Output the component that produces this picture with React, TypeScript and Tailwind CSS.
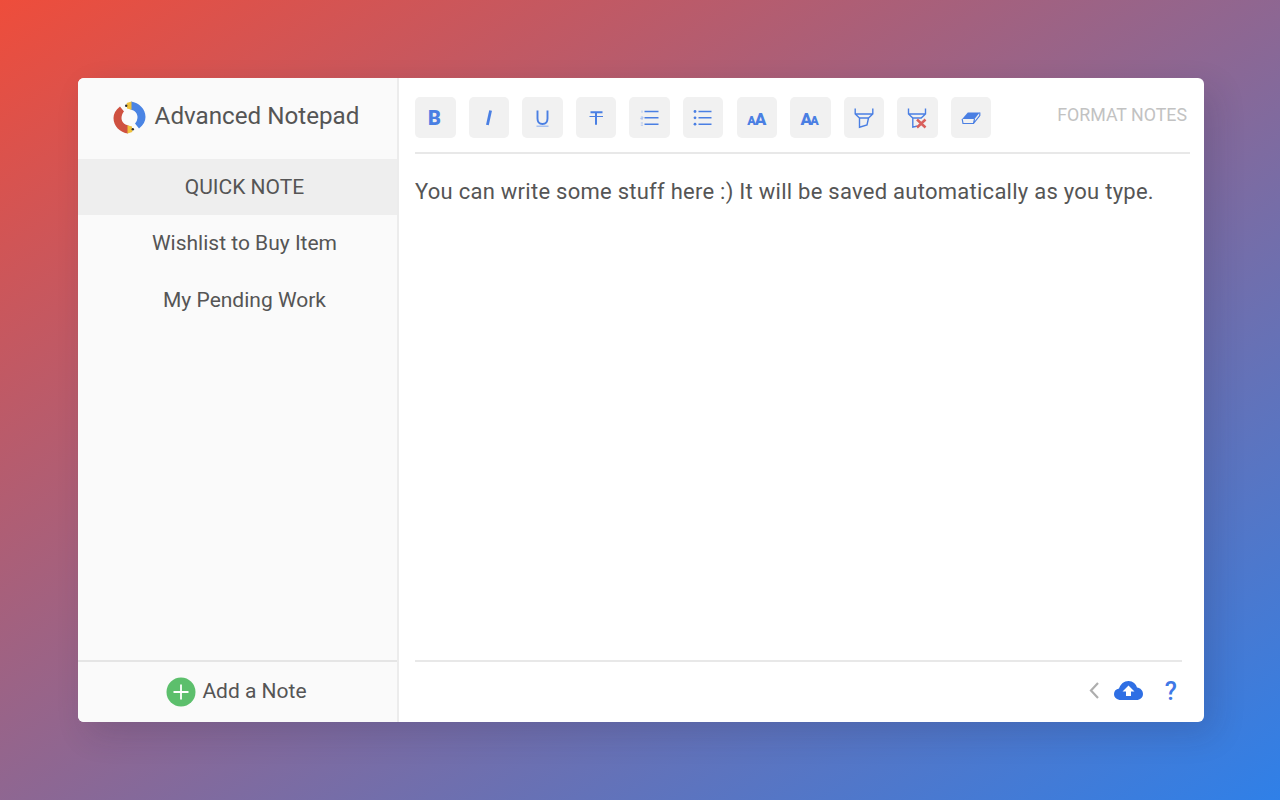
import React from 'react';

const blue = '#4a7fe3';

function ToolButton({ children }: { children: React.ReactNode }) {
  return (
    <button className="flex h-[41px] w-[40.5px] shrink-0 items-center justify-center rounded-[5px] bg-[#f1f1f1]">
      <svg width="24" height="24" viewBox="0 0 24 24" fill="none">
        {children}
      </svg>
    </button>
  );
}

function Logo() {
  const half = (
    <>
      <path d="M14.5 24.3L19 25.5L19.3 31L14.5 32.5Z" fill="#f0c23c" />
      <circle cx="19.8" cy="28.2" r="1.2" fill="#2d2d2d" />
    </>
  );
  return (
    <svg width="33" height="33" viewBox="0 0 33 33">
      <path d="M7 5.5C2.5 9 .5 13 .5 17C.5 25 7 31.5 15 32.5L15.5 24.5C11 23.8 8.5 20.5 8.5 17C8.5 14.5 9.5 12 11 10.5Z" fill="#cf5140" />
      {half}
      <g transform="rotate(180 16.5 16.5)">
        <path d="M7 5.5C2.5 9 .5 13 .5 17C.5 25 7 31.5 15 32.5L15.5 24.5C11 23.8 8.5 20.5 8.5 17C8.5 14.5 9.5 12 11 10.5Z" fill="#4a84e4" />
        {half}
      </g>
    </svg>
  );
}

export default function App() {
  return (
    <div className="flex h-screen w-full items-center justify-center bg-[linear-gradient(to_bottom_right,#ee4d3b_0%,#2f80e8_100%)] pl-[2px] font-['Roboto',sans-serif] text-[#555555]">
      <div className="flex h-[644px] w-[1126px] overflow-hidden rounded-[6px] bg-white shadow-[10px_12px_32px_rgba(30,30,60,0.16)]">
        {/* sidebar */}
        <aside className="flex w-[321px] shrink-0 flex-col border-r-2 border-[#ececec] bg-[#fafafa]">
          <div className="flex h-[81px] shrink-0 items-center justify-center gap-[9px] pr-[3px] pb-[3px]">
            <Logo />
            <span className="mb-[2px] text-[24.2px] leading-none">Advanced Notepad</span>
          </div>
          <div className="flex h-[56px] items-center justify-center bg-[#eeeeee] pt-[2px] pl-[14px] text-[21px]">QUICK NOTE</div>
          <div className="flex h-[56px] items-center justify-center pt-[2px] pl-[14px] text-[21px]">Wishlist to Buy Item</div>
          <div className="flex h-[57px] items-center justify-center pt-[2px] pl-[14px] text-[21px]">My Pending Work</div>
          <div className="flex-1" />
          <div className="flex h-[62px] items-center justify-center gap-[6px] border-t-2 border-[#e5e5e5] pr-[2px] pb-[1px] text-[21px]">
            <svg width="30" height="30" viewBox="0 0 30 30">
              <circle cx="15" cy="15" r="14.5" fill="#5cbf6c" />
              <path d="M15 7.5V22.5M7.5 15H22.5" stroke="#ffffff" strokeWidth="1.8" />
            </svg>
            <span>Add a Note</span>
          </div>
        </aside>

        {/* editor */}
        <main className="flex min-w-0 flex-1 flex-col pl-[16px]">
          <div className="mr-[14px] flex h-[76px] shrink-0 items-center border-b-2 border-[#e8e8e8] pt-[5px]">
            <div className="flex gap-[13.1px]">
              <ToolButton>
                <text x="11.5" y="18.5" textAnchor="middle" fontFamily="Roboto, sans-serif" fontWeight="900" fontSize="20" fill={blue}>B</text>
              </ToolButton>
              <ToolButton>
                <path d="M13.6 4.5L10.4 19" stroke={blue} strokeWidth="2.8" />
              </ToolButton>
              <ToolButton>
                <path d="M7.5 4.5V12.5C7.5 16.5 9.5 18 12.5 18S17.5 16.5 17.5 12.5V4.5" stroke={blue} strokeWidth="1.9" />
                <path d="M6.5 20.3H18.5" stroke="#a9c2f0" strokeWidth="1.4" />
              </ToolButton>
              <ToolButton>
                <path d="M6.5 6.2H18.5M12 6V18.8" stroke={blue} strokeWidth="2" />
                <path d="M5.5 10.5H19" stroke={blue} strokeWidth="1.2" />
              </ToolButton>
              <ToolButton>
                <path d="M6.5 5.5H20.5M6.5 11.8H20.5M6.5 18.2H20.5" stroke={blue} strokeWidth="1.4" />
                <path d="M4 4.5V6.8M2.8 11H5V12.2H2.8V13H5M2.8 17H5M2.8 19.2H5" stroke="#9db9ef" strokeWidth=".8" />
              </ToolButton>
              <ToolButton>
                <path d="M7.5 5.5H20.5M7.5 11.8H20.5M7.5 18.2H20.5" stroke={blue} strokeWidth="1.4" />
                <circle cx="4" cy="5.5" r="1.4" fill={blue} />
                <circle cx="4" cy="11.8" r="1.4" fill={blue} />
                <circle cx="4" cy="18.2" r="1.4" fill={blue} />
              </ToolButton>
              <ToolButton>
                <text x="6.5" y="18.8" textAnchor="middle" fontFamily="Roboto, sans-serif" fontWeight="900" fontSize="12.5" fill={blue}>A</text>
                <text x="15.5" y="18.8" textAnchor="middle" fontFamily="Roboto, sans-serif" fontWeight="900" fontSize="17" fill={blue}>A</text>
              </ToolButton>
              <ToolButton>
                <text x="8.2" y="18.8" textAnchor="middle" fontFamily="Roboto, sans-serif" fontWeight="900" fontSize="17" fill={blue}>A</text>
                <text x="16.6" y="18.8" textAnchor="middle" fontFamily="Roboto, sans-serif" fontWeight="900" fontSize="12.5" fill={blue}>A</text>
              </ToolButton>
              <ToolButton>
                <path d="M3.2 2.5V8L7.5 12H16.5L20.8 8V2.5M3.2 8H20.8M7.5 12V21.2L15 19L16.5 12" stroke={blue} strokeWidth="1.4" />
              </ToolButton>
              <ToolButton>
                <path d="M2.5 2.5V8L6.8 12H15.2L19.5 8V2.5M2.5 8H19.5M6.8 12V21.2L11.5 20" stroke={blue} strokeWidth="1.4" />
                <path d="M11 13.5L19.5 21.5M19.5 13.5L11 21.5" stroke="#d9605c" strokeWidth="2.5" />
              </ToolButton>
              <ToolButton>
                <path d="M8.8 6.5H20.8L15.5 13H3.2Z" fill={blue} />
                <path d="M3.2 13L4 17.5H14.5L20.8 9.5V6.5M15.5 13L14.5 17.5" stroke={blue} strokeWidth="1.2" />
              </ToolButton>
            </div>
            <span className="ml-auto pr-[3px] pb-[5px] text-[17.8px] text-[#c2c2c2]">FORMAT NOTES</span>
          </div>

          <p className="mt-[24px] text-[22px] leading-[27px] tracking-[0.26px]">
            You can write some stuff here :) It will be saved automatically as you type.
          </p>
          <div className="flex-1" />

          <div className="mr-[22px] flex h-[62px] shrink-0 items-center justify-end border-t-2 border-[#e8e8e8] pr-[5px] pb-[3px]">
            <svg width="10" height="17" viewBox="0 0 10 17" fill="none" className="mr-[15px]">
              <path d="M9 1L2 8.5L9 16" stroke="#aeaeae" strokeWidth="2.2" />
            </svg>
            <svg width="29" height="19" viewBox="0 0 29 19" className="mr-[22px]">
              <path d="M7 19C3 19 0 16.5 0 13C0 10 2 8 5 7.5C6.5 3 10 0 14.5 0C19 0 22 3 23 6.5C26.5 7 29 9.5 29 13C29 16.5 26 19 22.5 19Z" fill="#2f6fe4" />
              <path d="M14.5 4.5L20.5 10.5H17V15H12V10.5H8.5Z" fill="#ffffff" />
            </svg>
            <span className="pt-[1px] text-[25px] font-medium leading-none text-[#3f78e6]">?</span>
          </div>
        </main>
      </div>
    </div>
  );
}
